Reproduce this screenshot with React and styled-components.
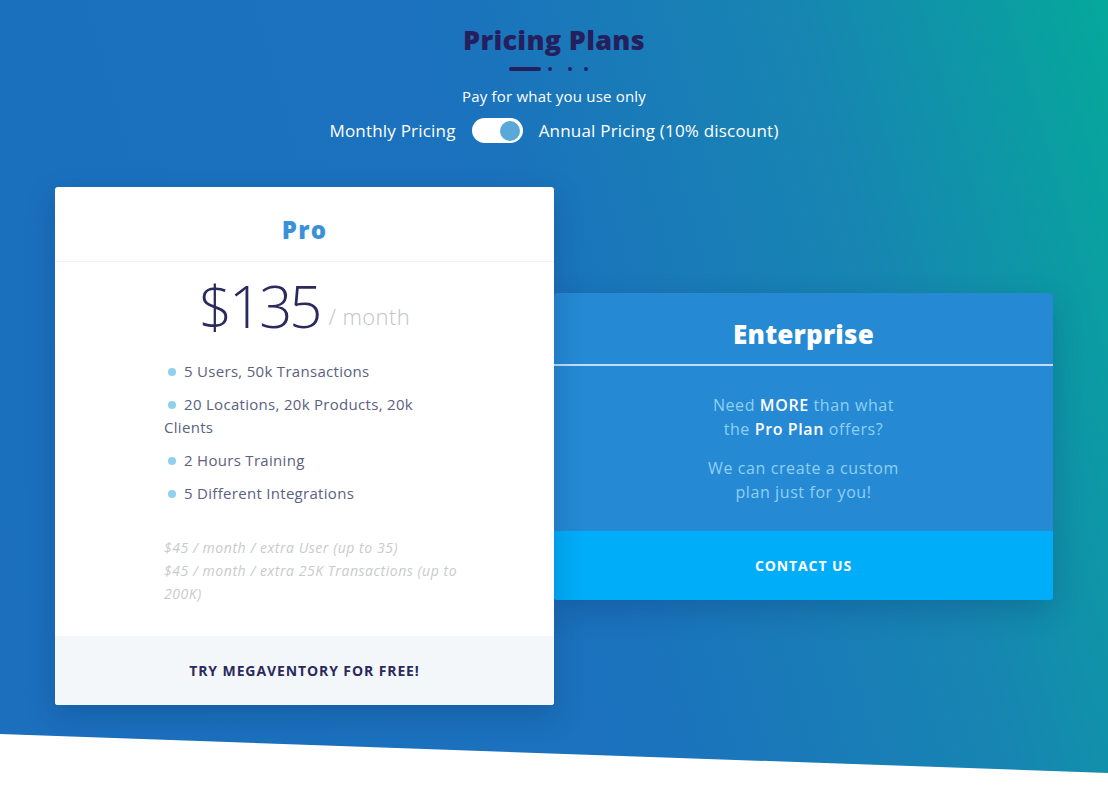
import React, { useState } from 'react';
import styled, { createGlobalStyle } from 'styled-components';

const GlobalStyle = createGlobalStyle`
  html, body {
    margin: 0;
    padding: 0;
    background: #ffffff;
  }
  body {
    font-family: "Open Sans", "Liberation Sans", sans-serif;
  }
  * {
    box-sizing: border-box;
  }
`;

const Section = styled.section`
  height: 792px;
  padding-top: 22px;
  background: linear-gradient(74deg, #1b6fbd 0%, #1b72bd 50%, #1785b2 76%, #05a89b 100%);
  clip-path: polygon(0 0, 100% 0, 100% 773px, 0 734px);
`;

const Header = styled.header`
  display: flex;
  flex-direction: column;
  align-items: center;
  color: #ffffff;
`;

const Title = styled.h1`
  margin: 0;
  font-size: 27px;
  font-weight: 800;
  letter-spacing: 0.3px;
  color: #251f5e;
  line-height: 36px;
`;

const Divider = styled.div`
  display: flex;
  align-items: center;
  margin-top: 9px;
  padding-right: 11px;
`;

const Dash = styled.span`
  display: block;
  width: ${(p) => (p.$long ? '32px' : '4px')};
  height: 4px;
  border-radius: 2px;
  background: #251f5e;
  margin-left: ${(p) => p.$gap || 0}px;
`;

const Subtitle = styled.p`
  margin: 15px 0 0;
  font-size: 15px;
  line-height: 20px;
  letter-spacing: 0.2px;
`;

const ToggleRow = styled.div`
  display: flex;
  align-items: center;
  gap: 14px;
  margin-top: 12px;
  font-size: 17px;
  letter-spacing: 0.2px;
`;

const Switch = styled.button`
  display: flex;
  align-items: center;
  justify-content: ${(p) => (p.$on ? 'flex-end' : 'flex-start')};
  width: 51px;
  height: 25px;
  margin: 0 2px;
  padding: 0 3px;
  border: none;
  border-radius: 13px;
  background: #ffffff;
  cursor: pointer;
`;

const Knob = styled.span`
  display: block;
  width: 20px;
  height: 20px;
  border-radius: 50%;
  background: #5aa8d7;
`;

const Cards = styled.div`
  display: flex;
  align-items: center;
  width: 998px;
  margin: 44px auto 0;
`;

const Card = styled.div`
  display: flex;
  flex-direction: column;
  width: 499px;
  border-radius: 3px;
  overflow: hidden;
  background: ${(p) => (p.$featured ? '#ffffff' : '#2589d4')};
  box-shadow: 0 10px 30px rgba(0, 30, 80, 0.22);
  position: relative;
  z-index: ${(p) => (p.$featured ? 2 : 1)};
`;

const CardHead = styled.div`
  display: flex;
  align-items: center;
  justify-content: center;
  height: ${(p) => (p.$featured ? '75px' : '73px')};
  border-bottom: ${(p) => (p.$featured ? '1px solid #f1f3f5' : '2px solid rgba(220, 238, 252, 0.85)')};
`;

const PlanName = styled.h2`
  margin: 0;
  padding-top: ${(p) => (p.$featured ? '11px' : '12px')};
  font-size: ${(p) => (p.$featured ? '24px' : '26px')};
  font-weight: 800;
  letter-spacing: ${(p) => (p.$featured ? '1.2px' : '0.2px')};
  color: ${(p) => (p.$featured ? '#3a91d8' : '#ffffff')};
`;

const ProBody = styled.div`
  padding: 10px 0 31px;
`;

const Price = styled.div`
  display: flex;
  align-items: baseline;
  justify-content: center;
  color: #2a2a5c;
`;

const Amount = styled.span`
  font-size: 58px;
  font-weight: 300;
  letter-spacing: -3px;
  line-height: 68px;
`;

const Per = styled.span`
  margin-left: 9px;
  font-size: 22px;
  font-weight: 300;
  letter-spacing: 0.4px;
  color: #c3c3c6;
  position: relative;
  top: -3px;
`;

const Details = styled.div`
  width: 298px;
  margin-left: 109px;
`;

const Features = styled.ul`
  list-style: none;
  margin: 20px 0 0;
  padding: 0;
`;

const Feature = styled.li`
  font-size: 15px;
  line-height: 23px;
  letter-spacing: 0.3px;
  color: #5b6180;
  margin-bottom: 10px;

  &::before {
    content: '';
    display: inline-block;
    width: 8px;
    height: 8px;
    margin: 0 8px 1px 4px;
    border-radius: 50%;
    background: #8fd0ef;
  }
`;

const Notes = styled.div`
  margin-top: 31px;
  font-size: 14px;
  font-style: italic;
  line-height: 23px;
  letter-spacing: 0.55px;
  color: #c9cacd;
`;

const CardFoot = styled.div`
  display: flex;
  align-items: center;
  justify-content: center;
  height: 69px;
  background: ${(p) => (p.$featured ? '#f4f7fa' : '#00adf8')};
  color: ${(p) => (p.$featured ? '#2a2a5c' : '#ffffff')};
  font-size: 14px;
  font-weight: 700;
  letter-spacing: 0.9px;
  cursor: pointer;
`;

const EntBody = styled.div`
  display: flex;
  flex-direction: column;
  align-items: center;
  padding: 27px 0 27px;
  text-align: center;
`;

const EntText = styled.p`
  max-width: 205px;
  margin: 0 0 15px;
  font-size: 16px;
  line-height: 24px;
  letter-spacing: 0.6px;
  color: #90d0f2;

  &:last-child {
    margin-bottom: 0;
  }

  strong {
    font-weight: 600;
    color: #ffffff;
  }
`;

export default function App() {
  const [annual, setAnnual] = useState(true);

  return (
    <>
      <GlobalStyle />
      <Section>
        <Header>
          <Title>Pricing Plans</Title>
          <Divider>
            <Dash $long />
            <Dash $gap={7} />
            <Dash $gap={16} />
            <Dash $gap={12} />
          </Divider>
          <Subtitle>Pay for what you use only</Subtitle>
          <ToggleRow>
            <span>Monthly Pricing</span>
            <Switch $on={annual} onClick={() => setAnnual(!annual)} aria-label="Toggle pricing">
              <Knob />
            </Switch>
            <span>Annual Pricing (10% discount)</span>
          </ToggleRow>
        </Header>

        <Cards>
          <Card $featured>
            <CardHead $featured>
              <PlanName $featured>Pro</PlanName>
            </CardHead>
            <ProBody>
              <Price>
                <Amount>$135</Amount>
                <Per>/ month</Per>
              </Price>
              <Details>
                <Features>
                  <Feature>5 Users, 50k Transactions</Feature>
                  <Feature>20 Locations, 20k Products, 20k Clients</Feature>
                  <Feature>2 Hours Training</Feature>
                  <Feature>5 Different Integrations</Feature>
                </Features>
                <Notes>
                  $45 / month / extra User (up to 35)
                  <br />
                  $45 / month / extra 25K Transactions (up to 200K)
                </Notes>
              </Details>
            </ProBody>
            <CardFoot $featured>TRY MEGAVENTORY FOR FREE!</CardFoot>
          </Card>

          <Card>
            <CardHead>
              <PlanName>Enterprise</PlanName>
            </CardHead>
            <EntBody>
              <EntText>
                Need <strong>MORE</strong> than what the <strong>Pro Plan</strong> offers?
              </EntText>
              <EntText>We can create a custom plan just for you!</EntText>
            </EntBody>
            <CardFoot>CONTACT US</CardFoot>
          </Card>
        </Cards>
      </Section>
    </>
  );
}
